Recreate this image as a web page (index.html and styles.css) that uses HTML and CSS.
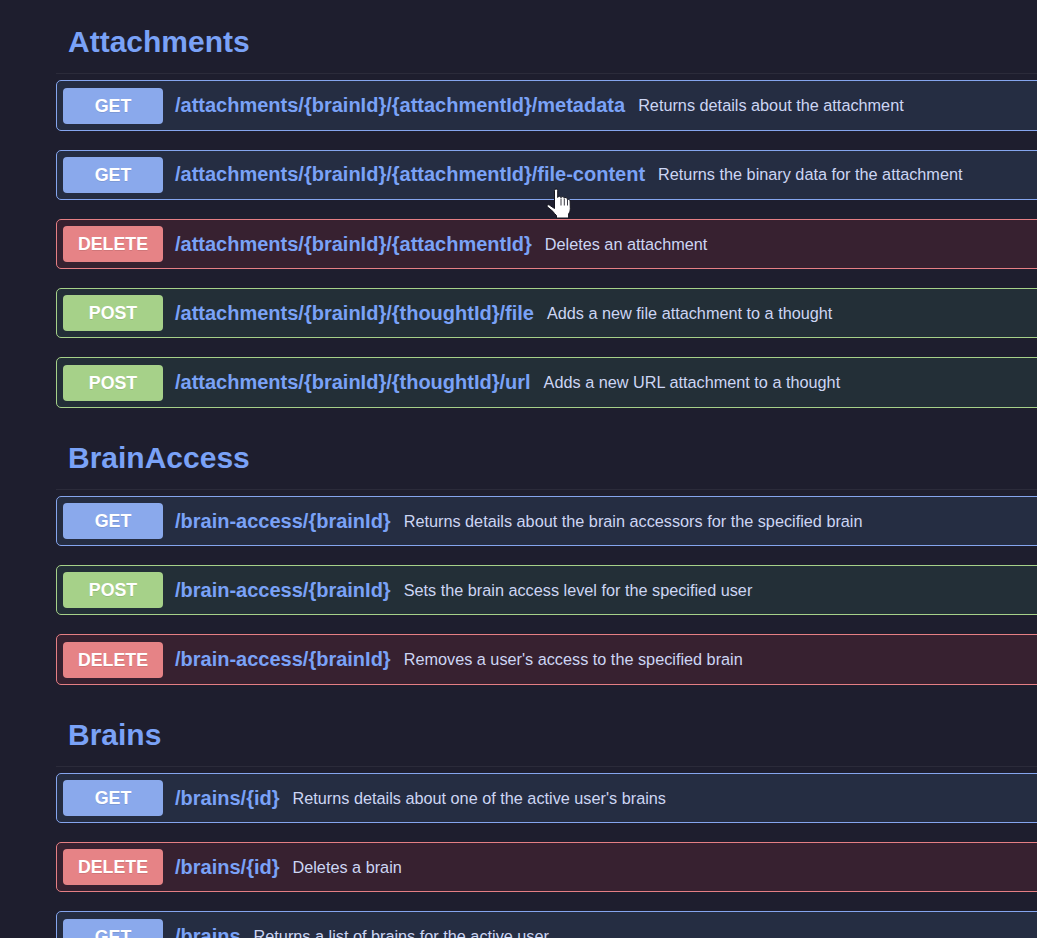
FILE: index.html
```html
<!DOCTYPE html>
<html lang="en">
<head>
<meta charset="utf-8">
<title>API</title>
<link rel="stylesheet" href="styles.css">
</head>
<body>
<main class="page">
  <section class="tag">
    <h3 class="tag-title">Attachments</h3>
    <div class="op get"><span class="method">GET</span><span class="path">/attachments/{brainId}/{attachmentId}/metadata</span><span class="desc">Returns details about the attachment</span></div>
    <div class="op get"><span class="method">GET</span><span class="path">/attachments/{brainId}/{attachmentId}/file-content</span><span class="desc">Returns the binary data for the attachment</span></div>
    <div class="op delete"><span class="method">DELETE</span><span class="path">/attachments/{brainId}/{attachmentId}</span><span class="desc">Deletes an attachment</span></div>
    <div class="op post"><span class="method">POST</span><span class="path">/attachments/{brainId}/{thoughtId}/file</span><span class="desc">Adds a new file attachment to a thought</span></div>
    <div class="op post"><span class="method">POST</span><span class="path">/attachments/{brainId}/{thoughtId}/url</span><span class="desc">Adds a new URL attachment to a thought</span></div>
  </section>
  <section class="tag">
    <h3 class="tag-title">BrainAccess</h3>
    <div class="op get"><span class="method">GET</span><span class="path">/brain-access/{brainId}</span><span class="desc">Returns details about the brain accessors for the specified brain</span></div>
    <div class="op post"><span class="method">POST</span><span class="path">/brain-access/{brainId}</span><span class="desc">Sets the brain access level for the specified user</span></div>
    <div class="op delete"><span class="method">DELETE</span><span class="path">/brain-access/{brainId}</span><span class="desc">Removes a user's access to the specified brain</span></div>
  </section>
  <section class="tag">
    <h3 class="tag-title">Brains</h3>
    <div class="op get"><span class="method">GET</span><span class="path">/brains/{id}</span><span class="desc">Returns details about one of the active user's brains</span></div>
    <div class="op delete"><span class="method">DELETE</span><span class="path">/brains/{id}</span><span class="desc">Deletes a brain</span></div>
    <div class="op get"><span class="method">GET</span><span class="path">/brains</span><span class="desc">Returns a list of brains for the active user</span></div>
  </section>
</main>
<svg class="cursor" width="26" height="33" viewBox="0 0 26 33" aria-hidden="true">
  <path d="M8.5 3.500a1.600 1.600 0 0 1 3.200 0V10.500a1.700 1.700 0 0 1 3.300.2a1.700 1.700 0 0 1 3.300.6a1.600 1.600 0 0 1 3 .8l.2.8a1.500 1.500 0 0 1 2.600 1l.2 7.500c0 2.400-.7 4-1.700 5.500V31H10.500v-2.500c-1.500-1.300-2.600-2.700-3.700-4.200L1.300 19.800c-1-1.300.5-2.700 2-1.800l5.200 3.500Z" fill="#fff" stroke="#15151f" stroke-width="1"/>
  <path d="M15 11.500v7M18.300 12v6.500M21.500 13v5.500" stroke="#3a3a44" stroke-width="1" fill="none"/>
</svg>
</body>
</html>
```

FILE: styles.css
```css
* { box-sizing: border-box; }
html, body { margin: 0; height: 100%; overflow: hidden; background: #1e1e2e; }
body { font-family: "Liberation Sans", Arial, sans-serif; position: relative; }
.page { width: 1200px; padding: 0 0 0 56px; }
.tag-title {
  margin: 0 0 6.33px;
  height: 74.12px;
  padding: 22px 0 0 12px;
  border-bottom: 1px solid #2b2b3a;
  color: #7aa2f7;
  font-size: 30px;
  line-height: 40px;
  font-weight: 700;
}
.tag + .tag .tag-title { height: 62.92px; padding-top: 11px; }
.op {
  display: flex;
  align-items: center;
  height: 50.25px;
  margin-bottom: 19px;
  padding: 0 6px;
  border: 1px solid;
  border-radius: 5px;
}
.get { background: #252d42; border-color: #85a5ee; }
.post { background: #232f37; border-color: #a6d189; }
.delete { background: #372130; border-color: #e57f84; }
.method {
  flex: none;
  width: 100px;
  height: 36px;
  margin-right: 12px;
  border-radius: 4px;
  color: #fff;
  font-size: 17.8px;
  font-weight: 700;
  line-height: 36px;
  text-align: center;
  text-shadow: 0 1px 0 rgba(0, 0, 0, .1);
}
.get .method { background: #8aa9ec; }
.post .method { background: #a6d189; }
.delete .method { background: #e68386; }
.path { color: #7aa2f7; font-size: 20px; font-weight: 700; margin-right: 13px; white-space: nowrap; }
.desc { color: #cdd6f4; font-size: 16.25px; white-space: nowrap; }
.cursor { position: absolute; left: 546px; top: 187px; }
```
